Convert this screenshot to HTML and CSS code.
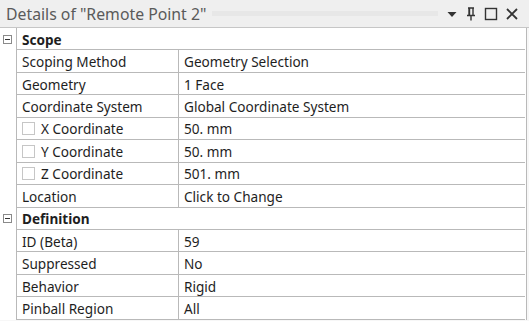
FILE: index.html
```html
<!DOCTYPE html>
<html>
<head>
<meta charset="utf-8">
<link rel="stylesheet" href="styles.css">
</head>
<body>
<div class="panel">
  <div class="titlebar">
    <span class="title">Details of "Remote Point 2"</span>
    <span class="grip"></span>
    <span class="tools">
      <svg class="ico" width="12" height="12" viewBox="0 0 12 12"><path d="M1.5 4 H10.5 L6 9 Z" fill="#333"/></svg>
      <svg class="ico" width="12" height="14" viewBox="0 0 12 14"><path d="M3 1 H9 M4 1 V8 M8 1 V8 M4.5 1 V8 M2 8.5 H10 M6 8.5 V13.5" stroke="#333" stroke-width="1.4" fill="none"/></svg>
      <svg class="ico" width="14" height="14" viewBox="0 0 14 14"><rect x="1.5" y="1.5" width="11" height="11" fill="none" stroke="#333" stroke-width="1.4"/></svg>
      <svg class="ico" width="14" height="14" viewBox="0 0 14 14"><path d="M2 2 L12 12 M12 2 L2 12" stroke="#333" stroke-width="1.8"/></svg>
    </span>
  </div>
  <div class="body">
    <div class="gutter-row"><span class="toggle"></span></div>
    <div class="group">Scope</div>

    <div class="gutter-row"></div>
    <div class="label">Scoping Method</div><div class="value">Geometry Selection</div>

    <div class="gutter-row"></div>
    <div class="label">Geometry</div><div class="value">1 Face</div>

    <div class="gutter-row"></div>
    <div class="label">Coordinate System</div><div class="value">Global Coordinate System</div>

    <div class="gutter-row"></div>
    <div class="label"><span class="check"></span>X Coordinate</div><div class="value">50. mm</div>

    <div class="gutter-row"></div>
    <div class="label"><span class="check"></span>Y Coordinate</div><div class="value">50. mm</div>

    <div class="gutter-row"></div>
    <div class="label"><span class="check"></span>Z Coordinate</div><div class="value">501. mm</div>

    <div class="gutter-row"></div>
    <div class="label">Location</div><div class="value">Click to Change</div>

    <div class="gutter-row"><span class="toggle"></span></div>
    <div class="group">Definition</div>

    <div class="gutter-row"></div>
    <div class="label">ID (Beta)</div><div class="value">59</div>

    <div class="gutter-row"></div>
    <div class="label">Suppressed</div><div class="value">No</div>

    <div class="gutter-row"></div>
    <div class="label">Behavior</div><div class="value">Rigid</div>

    <div class="gutter-row"></div>
    <div class="label">Pinball Region</div><div class="value">All</div>
  </div>
</div>
</body>
</html>
```

FILE: styles.css
```css
html, body {
  margin: 0;
  padding: 0;
  background: #f7f7f7;
}
.panel {
  width: 529px;
  height: 321px;
  overflow: hidden;
  font-family: "Noto Sans", "Open Sans", sans-serif;
  font-size: 13.6px;
  color: #1e1e1e;
}
.titlebar {
  height: 28px;
  box-sizing: border-box;
  display: flex;
  align-items: center;
  padding-left: 6px;
  padding-right: 10px;
  background: #efefef;
  border-bottom: 1px solid #c6c6c6;
}
.title {
  font-size: 15.8px;
  color: #5a5a5a;
  white-space: nowrap;
}
.grip {
  flex: 1;
  height: 5px;
  margin: 0 8px 0 6px;
  background-image: radial-gradient(circle, #dedede 0.6px, transparent 0.8px);
  background-size: 2px 2px;
}
.tools {
  display: flex;
  align-items: center;
  gap: 7px;
}
.ico { display: block; }
.body {
  display: grid;
  grid-template-columns: 16px 163px 346px;
  grid-auto-rows: 22.45px;
  background: #fff;
  width: 526px;
  border-right: 1px solid #b9b9b9;
}
.gutter-row {
  background: #fff;
  display: flex;
  align-items: center;
  justify-content: center;
}
.toggle {
  width: 9px;
  height: 9px;
  box-sizing: border-box;
  border: 1px solid #8a8a8a;
  position: relative;
  margin-left: -1px;
}
.toggle::after {
  content: "";
  position: absolute;
  left: 1px;
  right: 1px;
  top: 3px;
  height: 1px;
  background: #333;
}
.group, .label, .value {
  box-sizing: border-box;
  border-bottom: 1px solid #b9b9b9;
  display: flex;
  align-items: center;
  white-space: nowrap;
  padding-top: 1px;
}
.group {
  grid-column: 2 / 4;
  font-weight: bold;
  padding-left: 5px;
  border-left: 1px solid #b9b9b9;
}
.label {
  padding-left: 5px;
  border-left: 1px solid #b9b9b9;
  border-right: 1px solid #b9b9b9;
}
.value {
  padding-left: 5px;
}
.check {
  width: 13px;
  height: 13px;
  box-sizing: border-box;
  border: 1px solid #c6c6c6;
  background: #fff;
  margin-right: 6px;
}
```
